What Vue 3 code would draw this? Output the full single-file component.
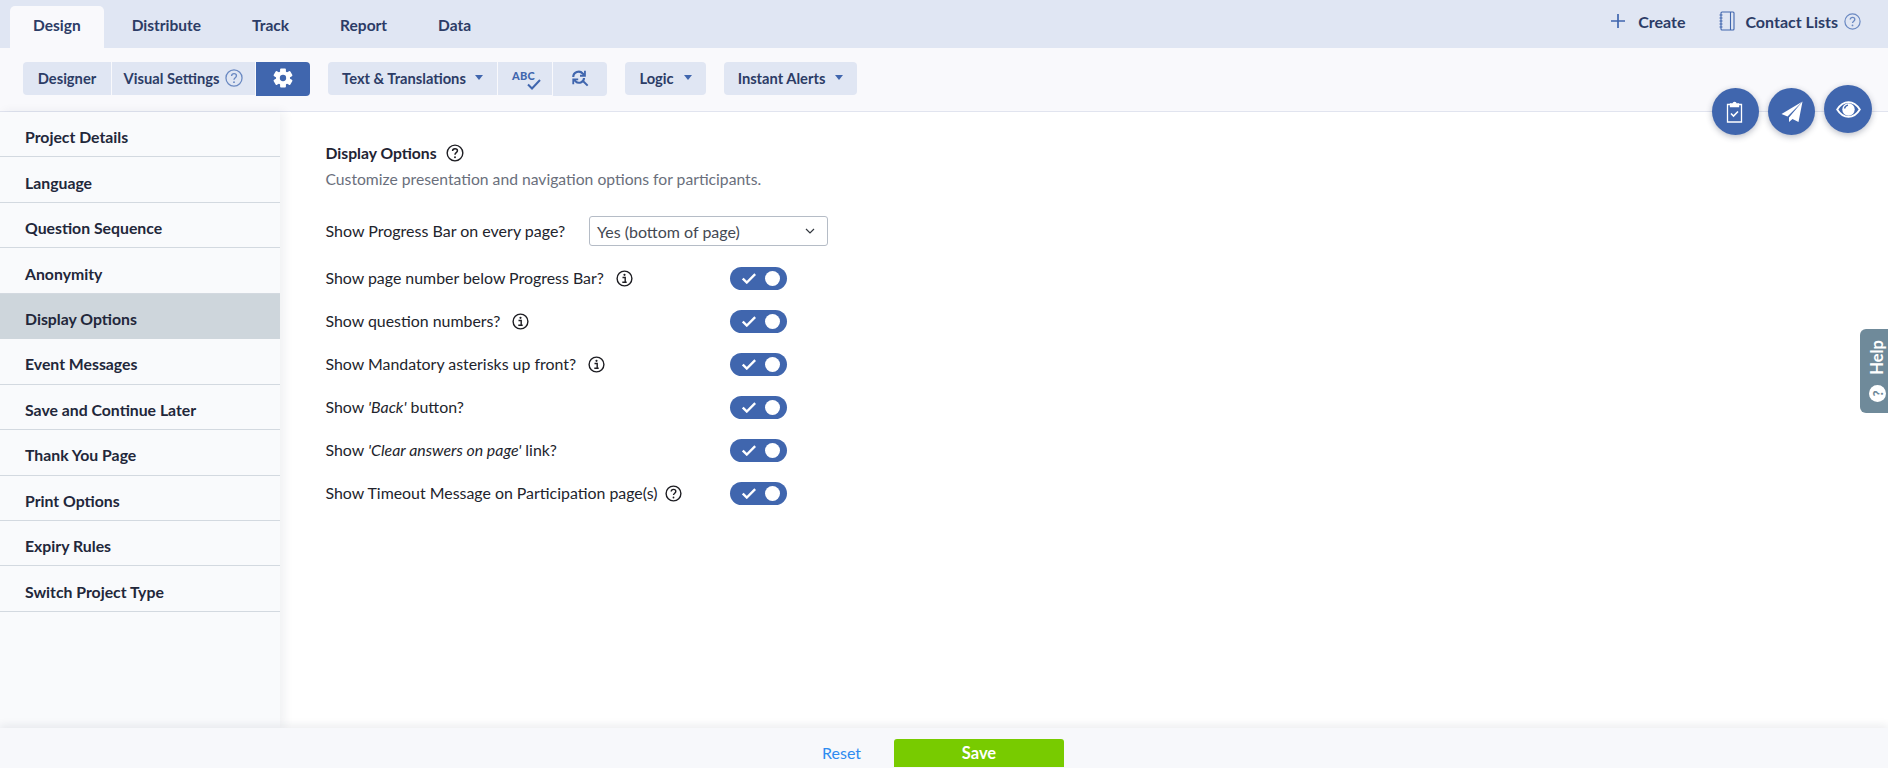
<script setup>
const tabs = ['Design', 'Distribute', 'Track', 'Report', 'Data']
const menu = ['Project Details', 'Language', 'Question Sequence', 'Anonymity', 'Display Options', 'Event Messages', 'Save and Continue Later', 'Thank You Page', 'Print Options', 'Expiry Rules', 'Switch Project Type']
const teeth = [0, 60, 120]
const options = [
  { parts: [['Show page number below Progress Bar?', false]], icon: 'info' },
  { parts: [['Show question numbers?', false]], icon: 'info' },
  { parts: [['Show Mandatory asterisks up front?', false]], icon: 'info' },
  { parts: [['Show ', false], ["'Back'", true], [' button?', false]] },
  { parts: [['Show ', false], ["'Clear answers on page'", true], [' link?', false]] },
  { parts: [['Show Timeout Message on Participation page(s)', false]], icon: 'help' }
]
</script>

<template>
  <div class="page">
    <header class="topbar">
      <nav class="tabs">
        <a v-for="(t, i) in tabs" :key="t" class="tab" :class="{ active: i === 0 }">{{ t }}</a>
      </nav>
      <div class="top-actions">
        <a class="top-link">
          <svg width="16" height="16" viewBox="0 0 16 16"><path d="M8 1v14M1 8h14" stroke="#4066ae" stroke-width="1.7" fill="none"/></svg>
          <span class="create-label">Create</span>
        </a>
        <a class="top-link contact">
          <svg width="16" height="20" viewBox="0 0 16 20" fill="none" stroke="#4066ae" stroke-width="1.1"><rect x="2" y="1" width="13" height="18" rx="1"/><path d="M11.5 1v18M.5 4h3M.5 7h3M.5 10h3M.5 13h3M.5 16h3"/></svg>
          <span class="contact-label">Contact Lists</span>
          <svg class="qmark" width="17" height="17" viewBox="0 0 17 17"><circle cx="8.5" cy="8.5" r="7.6" fill="none" stroke="#6a89c2" stroke-width="1.2"/><path d="M6.2 6.6c0-1.4 1-2.2 2.3-2.2s2.3.8 2.3 2c0 1.8-2.3 1.8-2.3 3.7" fill="none" stroke="#6a89c2" stroke-width="1.3"/><circle cx="8.5" cy="12.4" r=".9" fill="#6a89c2"/></svg>
        </a>
      </div>
    </header>

    <div class="toolbar">
      <div class="group">
        <button class="btn designer">Designer</button>
        <button class="btn visual">Visual Settings
          <svg class="qmark" width="18" height="18" viewBox="0 0 17 17"><circle cx="8.5" cy="8.5" r="7.6" fill="none" stroke="#6a89c2" stroke-width="1.2"/><path d="M6.2 6.6c0-1.4 1-2.2 2.3-2.2s2.3.8 2.3 2c0 1.8-2.3 1.8-2.3 3.7" fill="none" stroke="#6a89c2" stroke-width="1.3"/><circle cx="8.5" cy="12.4" r=".9" fill="#6a89c2"/></svg>
        </button>
        <button class="btn gear" aria-label="Settings">
          <svg width="20" height="20" viewBox="0 0 24 24">
            <rect v-for="a in teeth" :key="a" x="8.5" y="0.5" width="7" height="23" rx="1.2" fill="#fff" :transform="`rotate(${a} 12 12)`"/>
            <circle cx="12" cy="12" r="8.5" fill="#fff"/>
            <circle cx="12" cy="12" r="3.8" fill="#4066ae"/>
          </svg>
        </button>
      </div>
      <div class="group">
        <button class="btn text-tr">Text &amp; Translations <i class="caret"></i></button>
        <button class="btn abc" aria-label="Spell check">
          <span class="abc-text">ABC</span>
          <svg class="abc-check" width="14" height="11" viewBox="0 0 14 11"><path d="M1 5.5l4 4 8-8.500" fill="none" stroke="#4066ae" stroke-width="2"/></svg>
        </button>
        <button class="btn refresh" aria-label="Find and replace">
          <svg width="18" height="18" viewBox="0 0 20 20" fill="none" stroke="#4066ae" stroke-width="2.4"><path d="M2.500 9a6 6 0 0 1 10.500-4l1.500 1.500M14.500 10a5.500 5.500 0 0 1-9.500 3.500L3.500 12"/><path d="M15.500 2v5.500H10M2.500 17v-5.500H8" stroke-width="2"/><path d="M13 13l5.500 5.500" stroke-width="2.2"/></svg>
        </button>
      </div>
      <button class="btn solo logic">Logic <i class="caret"></i></button>
      <button class="btn solo alerts">Instant Alerts <i class="caret"></i></button>
    </div>

    <div class="body">
      <aside class="sidebar">
        <a v-for="m in menu" :key="m" class="menu-item" :class="{ selected: m === 'Display Options' }">{{ m }}</a>
      </aside>
      <main class="content">
        <h1 class="title">Display Options
          <svg width="18" height="18" viewBox="0 0 17 17"><circle cx="8.5" cy="8.5" r="7.4" fill="none" stroke="#1d1d22" stroke-width="1.3"/><path d="M6.2 6.6c0-1.4 1-2.2 2.3-2.2s2.3.8 2.3 2c0 1.8-2.3 1.8-2.3 3.7" fill="none" stroke="#1d1d22" stroke-width="1.4"/><circle cx="8.5" cy="12.5" r=".9" fill="#1d1d22"/></svg>
        </h1>
        <p class="desc">Customize presentation and navigation options for participants.</p>
        <div class="select-row">
          <label>Show Progress Bar on every page?</label>
          <div class="select">
            <span>Yes (bottom of page)</span>
            <svg width="10" height="6" viewBox="0 0 10 6"><path d="M1 1l4 4 4-4" fill="none" stroke="#33383f" stroke-width="1.2"/></svg>
          </div>
        </div>
        <div v-for="(o, i) in options" :key="i" class="opt-row">
          <div class="opt-label">
            <span class="opt-text"><template v-for="(p, j) in o.parts" :key="j"><em v-if="p[1]">{{ p[0] }}</em><template v-else>{{ p[0] }}</template></template></span>
            <svg v-if="o.icon === 'info'" class="info" width="17" height="17" viewBox="0 0 17 17"><circle cx="8.5" cy="8.5" r="7.4" fill="none" stroke="#1d1d22" stroke-width="1.4"/><circle cx="8.5" cy="4.8" r="1.1" fill="#1d1d22"/><path d="M6.500 7.500h2.700v4.400M6.300 12.300h4.400" fill="none" stroke="#1d1d22" stroke-width="1.4"/></svg>
            <svg v-if="o.icon === 'help'" class="help-i" width="17" height="17" viewBox="0 0 17 17"><circle cx="8.5" cy="8.5" r="7.4" fill="none" stroke="#1d1d22" stroke-width="1.4"/><path d="M6.200 6.600c0-1.400 1-2.200 2.300-2.200s2.300.8 2.300 2c0 1.800-2.300 1.800-2.300 3.700" fill="none" stroke="#1d1d22" stroke-width="1.4"/><circle cx="8.5" cy="12.5" r=".9" fill="#1d1d22"/></svg>
          </div>
          <div class="toggle">
            <svg width="14" height="11" viewBox="0 0 14 11"><path d="M.8 5.500l4 4 8.400-8.400" fill="none" stroke="#fff" stroke-width="2.400"/></svg>
            <i class="knob"></i>
          </div>
        </div>
      </main>
    </div>

    <footer class="footer">
      <a class="reset">Reset</a>
      <button class="save">Save</button>
    </footer>

    <div class="fabs">
      <button class="fab clip" aria-label="Checklist">
        <svg width="17" height="22" viewBox="0 0 16 22" fill="none" stroke="#fff" stroke-width="1.3"><path d="M4.500 3.500H1v17.500h14V3.500h-3.500"/><path d="M4 5.500v-2.500h2.500a1.500 1.500 0 0 1 3 0H12v2.500z" fill="#fff"/><path d="M4.500 12.500l2.500 2.500 4.500-4.500" stroke-width="1.6"/></svg>
      </button>
      <button class="fab" aria-label="Send">
        <svg width="22" height="21" viewBox="0 0 22 21" fill="#fff"><path d="M21.500 .5L.5 13l6 2.500z"/><path d="M21.500 .5L8 16.500V21l3.500-3 6 3z"/></svg>
      </button>
      <button class="fab eye" aria-label="Preview">
        <svg width="25" height="17" viewBox="0 0 25 17">
          <path d="M1.200 8.500C4 4 8 1.100 12.500 1.100S21 4 23.800 8.500C21 13 17 15.900 12.500 15.900S4 13 1.200 8.500z" fill="none" stroke="#fff" stroke-width="1.900"/>
          <circle cx="12.500" cy="8.500" r="6.200" fill="#fff"/>
          <path d="M8.500 7.500a4.300 4.300 0 0 1 3.500-3.300" fill="none" stroke="#4066ae" stroke-width="1.300"/>
        </svg>
      </button>
    </div>

    <div class="help-tab">
      <span class="help-circle">?</span>
      <span class="help-text">Help</span>
    </div>
  </div>
</template>

<style>
html, body { margin: 0; padding: 0; background: #fff; }
</style>

<style scoped>
.page { position: relative; width: 1888px; height: 768px; overflow: hidden; display: flex; flex-direction: column; font-family: "Lato", "Liberation Sans", sans-serif; color: #1f2433; background: #fff; }
.topbar { height: 48px; flex: none; display: flex; justify-content: space-between; background: #e0e6f3; }
.tabs { display: flex; gap: 5px; padding: 6px 0 0 10px; }
.tab { height: 42px; box-sizing: border-box; padding: 0 23px 4px; display: flex; align-items: center; font-size: 15.5px; font-weight: 700; color: #2c3c66; border-radius: 5px 5px 0 0; }
.tab.active { background: #f9f9fc; }
.top-actions { display: flex; align-items: center; padding: 0 27px 6px 0; gap: 34px; }
.top-link { display: flex; align-items: center; font-size: 16px; font-weight: 700; color: #2c3c66; }
.create-label { margin-left: 12px; }
.contact-label { margin-left: 10px; }
.contact .qmark { margin-left: 6px; }
.toolbar { height: 64px; flex: none; display: flex; align-items: flex-start; padding: 14px 0 0 23px; box-sizing: border-box; background: #f9f9fc; border-bottom: 1px solid #e1e4ef; }
.group { display: flex; gap: 1px; margin-right: 18px; }
.btn { height: 33px; border: 0; padding: 0 0 2px; background: #e0e6f3; color: #2c3c66; font: 700 14.7px "Lato", "Liberation Sans", sans-serif; display: flex; align-items: center; justify-content: center; }
.group .btn:first-child { border-radius: 4px 0 0 4px; }
.group .btn:last-child { border-radius: 0 4px 4px 0; }
.designer { width: 88px; }
.visual { width: 143px; gap: 6px; }
.gear { width: 54px; height: 34px; background: #4066ae; }
.text-tr { width: 169px; gap: 9px; }
.abc { width: 54px; position: relative; }
.abc-text { position: absolute; left: 14px; top: 7px; font-size: 11px; letter-spacing: .3px; color: #4066ae; font-weight: 900; }
.abc-check { position: absolute; left: 29px; top: 17px; }
.refresh { width: 54px; height: 34px; }
.solo { border-radius: 4px; gap: 10px; }
.logic { width: 81px; margin: 0 18px 0 0; }
.alerts { width: 133px; }
.caret { width: 0; height: 0; border-left: 4.5px solid transparent; border-right: 4.5px solid transparent; border-top: 5px solid #4066ae; }
.body { flex: 1; min-height: 0; display: flex; }
.sidebar { width: 280px; flex: none; background: #f9fafc; box-shadow: 4px 0 10px rgba(30, 40, 70, .07); display: flex; flex-direction: column; }
.menu-item { height: 45.45px; box-sizing: border-box; flex: none; padding: 5px 0 0 25px; display: flex; align-items: center; font-size: 15.8px; font-weight: 700; color: #22273a; border-bottom: 1px solid #d3d9e0; }
.menu-item.selected { background: #ced6dc; border-bottom-color: #ced6dc; }
.content { flex: 1; padding: 31px 0 0 45.5px; }
.title { margin: 0; display: flex; align-items: center; gap: 9px; font-size: 15.7px; font-weight: 700; color: #1f2433; line-height: 20px; }
.desc { margin: 6px 0 0; font-size: 15.7px; line-height: 20px; color: #6a6f7c; }
.select-row { display: flex; align-items: center; height: 30px; margin-top: 27px; }
.select-row label { width: 263.5px; padding-bottom: 2px; font-size: 16px; color: #22242c; }
.select { width: 239px; height: 30px; box-sizing: border-box; border: 1px solid #b5bcc6; border-radius: 3px; background: #fff; padding: 0 12px 0 7px; display: flex; align-items: center; justify-content: space-between; font-size: 16px; color: #444953; }
.opt-row { display: flex; align-items: center; height: 43px; }
.select-row + .opt-row { margin-top: 11px; }
.opt-label { width: 404.5px; flex: none; display: flex; align-items: center; gap: 12px; font-size: 15.9px; color: #22242c; }
.opt-text { padding-bottom: 2px; }
.opt-label .help-i { margin-left: -4px; }
.opt-label em { font-style: italic; }
.toggle { width: 57px; height: 23px; border-radius: 12px; background: #4066ae; display: flex; align-items: center; justify-content: space-between; padding: 0 7px 0 12px; box-sizing: border-box; }
.knob { width: 15px; height: 15px; border-radius: 50%; background: #fff; }
.footer { height: 40px; flex: none; background: #f7f8fb; box-shadow: 0 -3px 8px rgba(30, 40, 70, .08); position: relative; display: flex; align-items: flex-end; padding-left: 822px; }
.reset { font-size: 16px; color: #2e8bf0; margin-bottom: 6px; width: 72px; }
.save { width: 170px; height: 28px; border: 0; border-radius: 3px 3px 0 0; margin-bottom: 1px; background: #78cb00; color: #fff; font: 700 16.5px "Lato", "Liberation Sans", sans-serif; }
.fabs { position: absolute; top: 85px; left: 1712px; display: flex; gap: 9px; align-items: flex-start; }
.fab { width: 47px; height: 47px; margin-top: 3px; border: 0; padding: 0; border-radius: 50%; background: #4066ae; box-shadow: 0 2px 6px rgba(30, 40, 70, .3); display: flex; align-items: center; justify-content: center; }
.fab.clip { padding-right: 3px; }
.fab.eye { width: 48px; height: 48px; margin-top: 0; }
.help-tab { position: absolute; left: 1860px; top: 329px; width: 28px; height: 84px; box-sizing: border-box; border-radius: 6px 0 0 6px; background: #6f8a9a; color: #fff; display: flex; flex-direction: column-reverse; align-items: center; justify-content: flex-start; padding: 0 0 11px 7px; gap: 10px; }
.help-text { writing-mode: vertical-rl; transform: rotate(180deg); font-size: 16.5px; font-weight: 700; line-height: 1; }
.help-circle { width: 17px; height: 17px; flex: none; border-radius: 50%; background: #fff; color: #6f8a9a; font-size: 13px; font-weight: 900; display: flex; align-items: center; justify-content: center; transform: rotate(-90deg); }
</style>
